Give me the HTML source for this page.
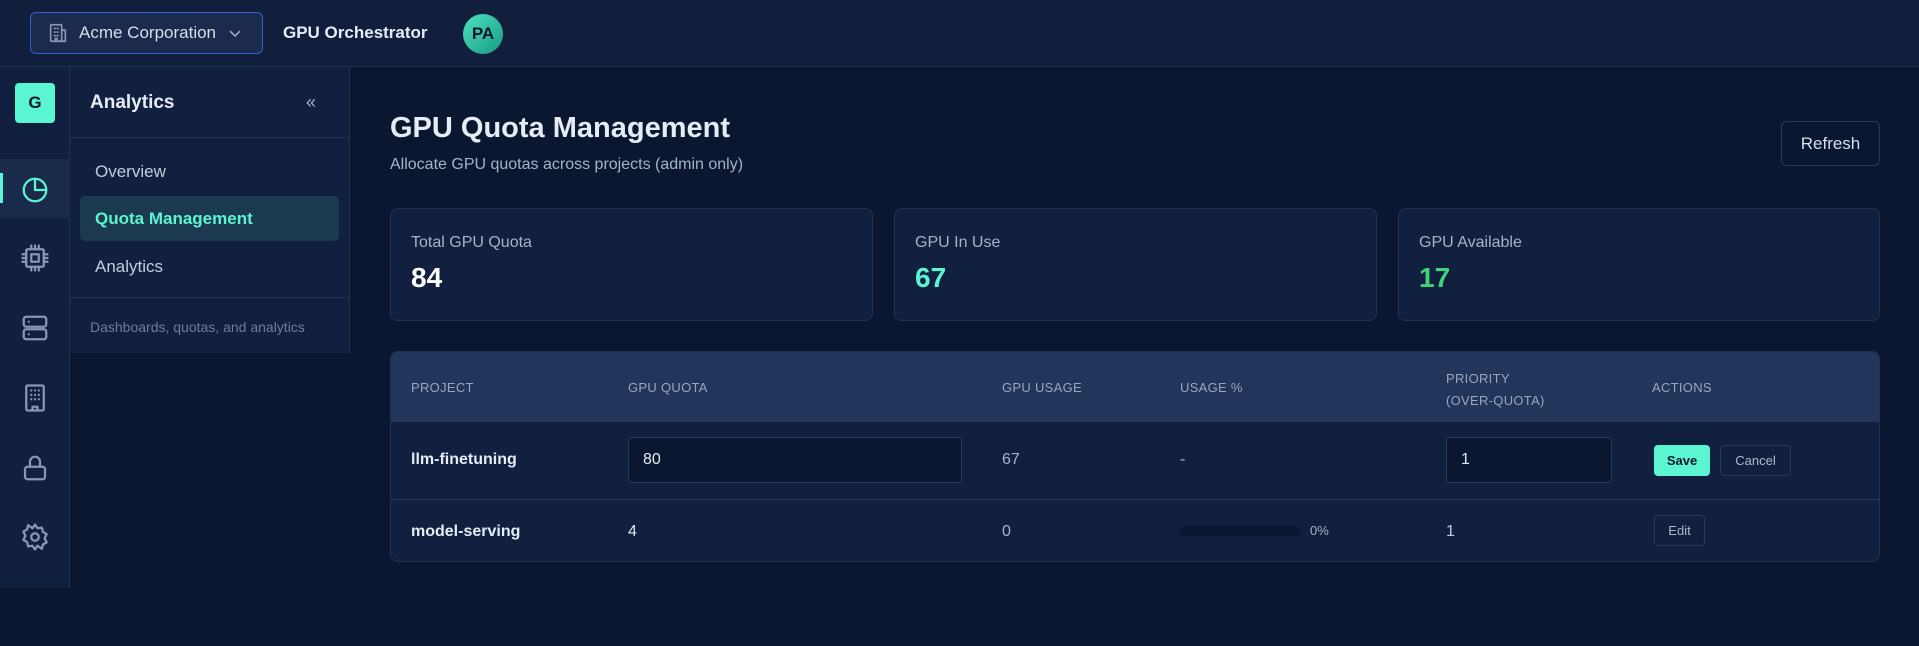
<!DOCTYPE html>
<html><head><meta charset="utf-8"><style>
*{box-sizing:border-box;margin:0;padding:0}
body{width:1919px;height:646px;background:#0b1730;font-family:"Liberation Sans",sans-serif;color:#e6ecf5;position:relative;overflow:hidden}
.abs{position:absolute}
.top{left:0;top:0;width:1919px;height:67px;background:#111e3c;border-bottom:1px solid #22304d}
.dd{left:30px;top:12px;width:233px;height:42px;border:1px solid #2f5fd0;border-radius:6px;background:#1c2b4d;display:flex;align-items:center;padding-left:16px;font-size:17px;color:#d7deea}
.rail{left:0;top:67px;width:70px;height:521px;background:#12203f;border-right:1px solid #24324f}
.panel{left:70px;top:67px;width:280px;height:286px;background:#12203f;border-right:1px solid #24324f}
.ic{left:20px;width:30px;height:30px;stroke:#8a97b3;fill:none;stroke-width:1.8;stroke-linecap:round;stroke-linejoin:round}
.card{background:#12203f;border:1px solid #24324f;border-radius:8px;top:208px;height:113px}
.card .l{position:absolute;left:20px;top:25px;font-size:16px;color:#a7b2c6}
.card .v{position:absolute;left:20px;top:53px;font-size:28px;font-weight:bold}
.th{font-size:13px;color:#9aa6be;letter-spacing:.3px;top:380px}
.td{font-size:16px}
.btn{border:1px solid #2c3a58;border-radius:4px;font-size:13px;color:#aeb8cc;display:flex;align-items:center;justify-content:center}
.inp{background:#0b1730;border:1px solid #2c3a58;border-radius:4px;font-size:16px;padding-left:14px;display:flex;align-items:center;height:46px;top:437px}
</style></head><body>
<div class="abs top"></div>
<div class="abs dd"><svg width="22" height="22" viewBox="0 0 24 24" fill="none" stroke="#8a97b3" stroke-width="1.8" stroke-linecap="round"><rect x="4" y="3" width="12" height="18" rx="1"/><path d="M16 9h4v12h-4M8 7h1M11 7h1M8 11h1M11 11h1M8 15h1M11 15h1M9 21v-3h2v3"/></svg><span style="margin-left:10px">Acme Corporation</span><svg style="margin-left:12px" width="14" height="14" viewBox="0 0 14 14" fill="none" stroke="#a7b2c6" stroke-width="1.5"><path d="M2 5l5 5 5-5"/></svg></div>
<div class="abs" style="left:283px;top:23px;font-size:17px;font-weight:bold;color:#e6ecf5">GPU Orchestrator</div>
<div class="abs" style="left:463px;top:14px;width:40px;height:40px;border-radius:50%;background:linear-gradient(135deg,#4fe3c2,#169a80);color:#0b1730;font-size:17px;font-weight:bold;display:flex;align-items:center;justify-content:center">PA</div>

<div class="abs rail"></div>
<div class="abs" style="left:15px;top:83px;width:40px;height:40px;border-radius:4px;background:#5cf5d2;color:#0b1730;font-weight:bold;font-size:17px;display:flex;align-items:center;justify-content:center">G</div>
<div class="abs" style="left:0;top:159px;width:70px;height:59px;background:#1a2a4a"></div>
<div class="abs" style="left:0;top:173px;width:3px;height:30px;background:#5cf5d2"></div>
<svg class="abs ic" style="top:175px;stroke:#5cf5d2" viewBox="0 0 24 24"><path d="M21 12a9 9 0 1 1-9-9"/><path d="M12 3a9 9 0 0 1 9 9h-9z"/></svg>
<svg class="abs ic" style="top:243px" viewBox="0 0 24 24"><rect x="5" y="5" width="14" height="14" rx="1"/><rect x="9" y="9" width="6" height="6"/><path d="M9 2v3M12 2v3M15 2v3M9 19v3M12 19v3M15 19v3M2 9h3M2 12h3M2 15h3M19 9h3M19 12h3M19 15h3"/></svg>
<svg class="abs ic" style="top:313px" viewBox="0 0 24 24"><rect x="3" y="3" width="18" height="8" rx="2"/><rect x="3" y="13" width="18" height="8" rx="2"/><path d="M7 7h.01M7 17h.01"/></svg>
<svg class="abs ic" style="top:383px" viewBox="0 0 24 24"><rect x="5" y="2" width="14" height="20" rx="1"/><path d="M9 6h.01M12 6h.01M15 6h.01M9 9.5h.01M12 9.5h.01M15 9.5h.01M9 13h.01M12 13h.01M15 13h.01M10 22v-3h4v3"/></svg>
<svg class="abs ic" style="top:453px" viewBox="0 0 24 24"><rect x="4" y="11" width="16" height="10" rx="2"/><path d="M8 11V7a4 4 0 0 1 8 0v4"/></svg>
<svg class="abs ic" style="top:522px" viewBox="0 0 24 24"><circle cx="12" cy="12" r="3"/><path d="M12 2l2 3 3.5-.5.8 3.4 3 1.8-1.6 3.3 1.6 3.3-3 1.8-.8 3.4L14 19l-2 3-2-3-3.5.5-.8-3.4-3-1.8L4.3 11 2.7 7.7l3-1.8.8-3.4L10 5z"/></svg>

<div class="abs panel"></div>
<div class="abs" style="left:90px;top:92px;font-size:19px;font-weight:bold">Analytics</div>
<div class="abs" style="left:306px;top:92px;font-size:18px;color:#a7b2c6">«</div>
<div class="abs" style="left:70px;top:137px;width:280px;height:1px;background:#24324f"></div>
<div class="abs" style="left:95px;top:162px;font-size:17px;color:#c4ccdb">Overview</div>
<div class="abs" style="left:80px;top:196px;width:259px;height:45px;border-radius:5px;background:#1b3a4f"></div>
<div class="abs" style="left:95px;top:209px;font-size:17px;font-weight:bold;color:#5cf5d2">Quota Management</div>
<div class="abs" style="left:95px;top:257px;font-size:17px;color:#c4ccdb">Analytics</div>
<div class="abs" style="left:70px;top:297px;width:280px;height:1px;background:#24324f"></div>
<div class="abs" style="left:90px;top:319px;font-size:14px;color:#6f7c97">Dashboards, quotas, and analytics</div>

<div class="abs" style="left:390px;top:112px;font-size:29px;font-weight:bold">GPU Quota Management</div>
<div class="abs" style="left:390px;top:156px;font-size:16px;color:#a7b2c6">Allocate GPU quotas across projects (admin only)</div>
<div class="abs btn" style="left:1781px;top:121px;width:99px;height:45px;font-size:17px;color:#d7deea;border-radius:6px">Refresh</div>

<div class="abs card" style="left:390px;width:483px"><div class="l">Total GPU Quota</div><div class="v" style="color:#fff">84</div></div>
<div class="abs card" style="left:894px;width:483px"><div class="l">GPU In Use</div><div class="v" style="color:#5cf5d2">67</div></div>
<div class="abs card" style="left:1398px;width:482px"><div class="l">GPU Available</div><div class="v" style="color:#3fd27a">17</div></div>

<div class="abs" style="left:390px;top:351px;width:1490px;height:211px;border:1px solid #24324f;border-radius:8px;background:#12203f;overflow:hidden">
<div style="height:70px;background:#22355a"></div>
<div style="height:1px;background:#2a3a5a;margin-top:77px"></div>
</div>
<div class="abs th" style="left:411px">PROJECT</div>
<div class="abs th" style="left:628px">GPU QUOTA</div>
<div class="abs th" style="left:1002px">GPU USAGE</div>
<div class="abs th" style="left:1180px">USAGE %</div>
<div class="abs th" style="left:1446px;top:368px;line-height:22px">PRIORITY<br>(OVER-QUOTA)</div>
<div class="abs th" style="left:1652px">ACTIONS</div>

<div class="abs td" style="left:411px;top:451px;font-weight:bold">llm-finetuning</div>
<div class="abs inp" style="left:628px;width:334px">80</div>
<div class="abs td" style="left:1002px;top:451px;color:#a7b2c6">67</div>
<div class="abs td" style="left:1180px;top:451px;color:#a7b2c6">-</div>
<div class="abs inp" style="left:1446px;width:166px">1</div>
<div class="abs btn" style="left:1654px;top:445px;width:56px;height:31px;background:#5cf5d2;border-color:#5cf5d2;color:#0b1730;font-weight:bold">Save</div>
<div class="abs btn" style="left:1720px;top:445px;width:71px;height:31px">Cancel</div>

<div class="abs td" style="left:411px;top:523px;font-weight:bold">model-serving</div>
<div class="abs td" style="left:628px;top:523px">4</div>
<div class="abs td" style="left:1002px;top:523px;color:#a7b2c6">0</div>
<div class="abs" style="left:1180px;top:526px;width:120px;height:10px;border-radius:5px;background:#0b1730"></div>
<div class="abs" style="left:1310px;top:523px;font-size:13px;color:#a7b2c6">0%</div>
<div class="abs td" style="left:1446px;top:523px;color:#c4ccdb">1</div>
<div class="abs btn" style="left:1654px;top:515px;width:51px;height:31px">Edit</div>
</body></html>
